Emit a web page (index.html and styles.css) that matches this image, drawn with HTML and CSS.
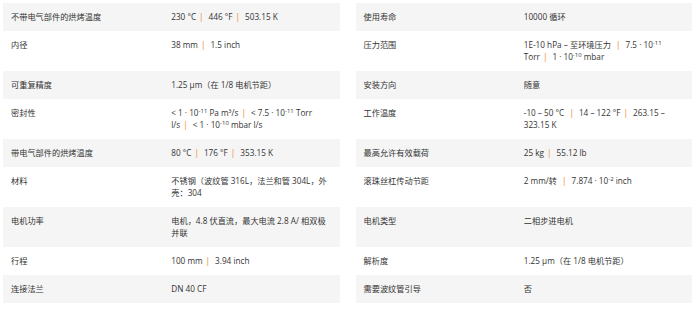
FILE: index.html
```html
<!DOCTYPE html>
<html lang="zh-CN">
<head>
  <meta charset="UTF-8">
  <meta name="viewport" content="width=device-width, initial-scale=1.0">
  <title>技术参数</title>
  <link rel="stylesheet" href="styles.css">
</head>
<body>
  <div class="specs">
    <div class="spec">
      <div class="spec-label">不带电气部件的烘烤温度</div>
      <div class="spec-value">230 °C<span class="sep">|</span>446 °F<span class="sep">|</span>503.15 K</div>
    </div>
    <div class="spec">
      <div class="spec-label">使用寿命</div>
      <div class="spec-value">10000 循环</div>
    </div>

    <div class="spec">
      <div class="spec-label">内径</div>
      <div class="spec-value">38 mm<span class="sep">|</span>1.5 inch</div>
    </div>
    <div class="spec">
      <div class="spec-label">压力范围</div>
      <div class="spec-value">1E-10 hPa – 至环境压力 <span class="sep">|</span>7.5 · 10<sup>-11</sup> Torr<span class="sep">|</span>1 · 10<sup>-10</sup> mbar</div>
    </div>

    <div class="spec">
      <div class="spec-label">可重复精度</div>
      <div class="spec-value">1.25 µm（在 1/8 电机节距）</div>
    </div>
    <div class="spec">
      <div class="spec-label">安装方向</div>
      <div class="spec-value">随意</div>
    </div>

    <div class="spec">
      <div class="spec-label">密封性</div>
      <div class="spec-value">&lt; 1 · 10<sup>-11</sup> Pa m³/s<span class="sep">|</span>&lt; 7.5 · 10<sup>-11</sup> Torr l/s<span class="sep">|</span>&lt; 1 · 10<sup>-10</sup> mbar l/s</div>
    </div>
    <div class="spec">
      <div class="spec-label">工作温度</div>
      <div class="spec-value">-10 – 50 °C <span class="sep">|</span>14 – 122 °F<span class="sep">|</span>263.15 – 323.15 K</div>
    </div>

    <div class="spec">
      <div class="spec-label">带电气部件的烘烤温度</div>
      <div class="spec-value">80 °C<span class="sep">|</span>176 °F<span class="sep">|</span>353.15 K</div>
    </div>
    <div class="spec">
      <div class="spec-label">最高允许有效载荷</div>
      <div class="spec-value">25 kg<span class="sep">|</span>55.12 lb</div>
    </div>

    <div class="spec">
      <div class="spec-label">材料</div>
      <div class="spec-value">不锈钢（波纹管 316L，法兰和管 304L，外壳：304</div>
    </div>
    <div class="spec">
      <div class="spec-label">滚珠丝杠传动节距</div>
      <div class="spec-value">2 mm/转 <span class="sep">|</span>7.874 · 10<sup>-2</sup> inch</div>
    </div>

    <div class="spec">
      <div class="spec-label">电机功率</div>
      <div class="spec-value">电机，4.8 伏直流，最大电流 2.8 A/ 相双极<br>并联</div>
    </div>
    <div class="spec">
      <div class="spec-label">电机类型</div>
      <div class="spec-value">二相步进电机</div>
    </div>

    <div class="spec">
      <div class="spec-label">行程</div>
      <div class="spec-value">100 mm<span class="sep">|</span>3.94 inch</div>
    </div>
    <div class="spec">
      <div class="spec-label">解析度</div>
      <div class="spec-value">1.25 µm（在 1/8 电机节距）</div>
    </div>

    <div class="spec">
      <div class="spec-label">连接法兰</div>
      <div class="spec-value">DN 40 CF</div>
    </div>
    <div class="spec">
      <div class="spec-label">需要波纹管引导</div>
      <div class="spec-value">否</div>
    </div>
  </div>
</body>
</html>
```

FILE: styles.css
```css
/* General Styling */
body {
  margin: 0;
  font-family: 'Open Sans', 'Noto Sans CJK SC', sans-serif;
  font-size: 8.2px;
  line-height: 12px;
  color: #333;
  background: #fff;
}

.specs {
  display: grid;
  grid-template-columns: 1fr 1fr;
  column-gap: 16px;
  padding: 3px 5px 0 3px;
}

.spec {
  display: grid;
  grid-template-columns: 1fr 1fr;
  padding: 8px 8px;
}

/* shaded rows: first pair of every four cells */
.spec:nth-child(4n+1),
.spec:nth-child(4n+2) {
  background: #f5f5f5;
}

.spec-label {
  padding-right: 8px;
}

.sep {
  color: #f39c54;
  font-weight: 600;
  margin: 0 5px 0 3px;
}

sup {
  font-size: 6px;
  line-height: 1;
  vertical-align: 3px;
}
```
